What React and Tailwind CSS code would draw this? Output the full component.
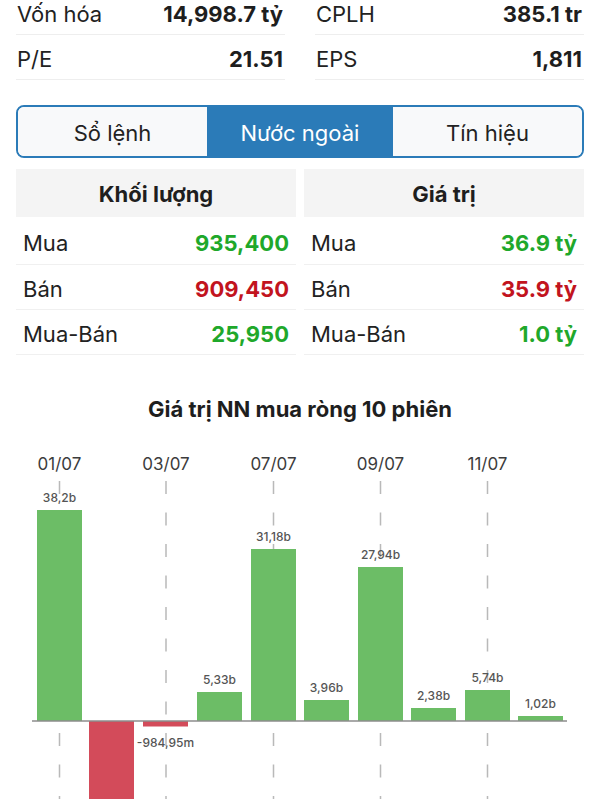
import React from "react";

const FONT = { fontFamily: 'Inter, "Noto Sans", sans-serif' };

const T = 430; // page y of svg top
const BASE = 722;

const bars = [
  { x: 37, top: 511, label: "38,2b" },
  { x: 89, bottom: 900, neg: true, label: "" },
  { x: 143, bottom: 727.5, neg: true, label: "-984,95m" },
  { x: 197, top: 693, label: "5,33b" },
  { x: 251, top: 550, label: "31,18b" },
  { x: 304, top: 701, label: "3,96b" },
  { x: 358, top: 568, label: "27,94b" },
  { x: 411, top: 709, label: "2,38b" },
  { x: 465, top: 691, label: "5,74b" },
  { x: 518, top: 717, label: "1,02b" },
];

const dates = [
  { x: 59.5, t: "01/07" },
  { x: 166, t: "03/07" },
  { x: 273.5, t: "07/07" },
  { x: 380.5, t: "09/07" },
  { x: 487.5, t: "11/07" },
];

function Chart() {
  const y = (v) => v - T;
  return (
    <svg width="600" height="370" viewBox="0 0 600 370" className="block">
      {dates.map((d) => (
        <g key={d.t}>
          <text
            x={d.x}
            y={y(465)}
            textAnchor="middle"
            dominantBaseline="central"
            fontSize="17"
            fill="#3c3c3c"
            style={FONT}
          >
            {d.t}
          </text>
          <line
            x1={d.x}
            x2={d.x}
            y1={y(482)}
            y2={y(812)}
            stroke="#b9b9b9"
            strokeWidth="1.5"
            strokeDasharray="13 18.5"
          />
        </g>
      ))}
      {bars.map((b, i) => {
        const w = 45;
        if (b.neg) {
          return (
            <g key={i}>
              <rect x={b.x} y={y(BASE)} width={w} height={b.bottom - BASE} fill="#d34b5a" />
              {b.label && (
                <text
                  x={b.x + w / 2}
                  y={y(b.bottom + 15.5)}
                  textAnchor="middle"
                  dominantBaseline="central"
                  fontSize="12"
                  fontWeight="500"
                  fill="#555"
                  style={FONT}
                >
                  {b.label}
                </text>
              )}
            </g>
          );
        }
        return (
          <g key={i}>
            <rect x={b.x} y={y(b.top)} width={w} height={BASE - b.top} fill="#6cbd66" />
            <text
              x={b.x + w / 2}
              y={y(b.top - 13)}
              textAnchor="middle"
              dominantBaseline="central"
              fontSize="12"
              fontWeight="500"
              fill="#555"
              style={FONT}
            >
              {b.label}
            </text>
          </g>
        );
      })}
      <line x1="32" x2="567" y1={y(BASE)} y2={y(BASE)} stroke="#8c8c8c" strokeWidth="1.5" />
    </svg>
  );
}

function InfoRow({ label, value }) {
  return (
    <div className="flex h-[45px] items-center justify-between border-b border-[#eeeeee] pl-[1px] pr-[2px] pt-[3px]">
      <span className="text-[22px] leading-[28px] text-[#222]">{label}</span>
      <span className="text-[22px] font-bold leading-[28px] text-[#1e1e1e]">{value}</span>
    </div>
  );
}

function TableRow({ label, value, color, h }) {
  return (
    <div className={`flex items-center justify-between border-b border-[#f0f0f0] px-[7px] pt-[4px] ${h}`}>
      <span className="text-[22px] leading-[28px] text-[#222]">{label}</span>
      <span className={`text-[22px] font-bold leading-[28px] ${color}`}>{value}</span>
    </div>
  );
}

function Table({ title, rows }) {
  return (
    <div className="flex flex-col">
      <div className="flex h-[48px] items-center justify-center bg-[#f4f4f4] pt-[2px] text-[22px] font-bold leading-[28px] text-[#1e1e1e]">
        {title}
      </div>
      <TableRow {...rows[0]} h="h-[48px]" />
      <TableRow {...rows[1]} h="h-[45px]" />
      <TableRow {...rows[2]} h="h-[45px]" />
    </div>
  );
}

export default function App() {
  return (
    <div className="h-[800px] w-[600px] overflow-hidden bg-white" style={FONT}>
      <div className="-mt-[10px] grid grid-cols-2 gap-[30px] px-4">
        <div className="flex flex-col">
          <InfoRow label="Vốn hóa" value="14,998.7 tỷ" />
          <InfoRow label="P/E" value="21.51" />
        </div>
        <div className="flex flex-col">
          <InfoRow label="CPLH" value="385.1 tr" />
          <InfoRow label="EPS" value="1,811" />
        </div>
      </div>

      <div className="mx-4 mt-[25px] grid h-[53px] grid-cols-[1fr_186px_1fr] overflow-hidden rounded-[8px] border-2 border-[#2b7bb8]">
        <div className="flex items-center justify-center bg-[#f8f9fa] pt-[3px] text-[22px] leading-[28px] text-[#222]">Sổ lệnh</div>
        <div className="flex items-center justify-center bg-[#2b7bb8] pt-[3px] text-[22px] leading-[28px] text-white">Nước ngoài</div>
        <div className="flex items-center justify-center bg-[#f8f9fa] pt-[3px] text-[22px] leading-[28px] text-[#222]">Tín hiệu</div>
      </div>

      <div className="mx-4 mt-[11px] grid grid-cols-2 gap-2">
        <Table
          title="Khối lượng"
          rows={[
            { label: "Mua", value: "935,400", color: "text-[#1fa82b]" },
            { label: "Bán", value: "909,450", color: "text-[#c2141e]" },
            { label: "Mua-Bán", value: "25,950", color: "text-[#1fa82b]" },
          ]}
        />
        <Table
          title="Giá trị"
          rows={[
            { label: "Mua", value: "36.9 tỷ", color: "text-[#1fa82b]" },
            { label: "Bán", value: "35.9 tỷ", color: "text-[#c2141e]" },
            { label: "Mua-Bán", value: "1.0 tỷ", color: "text-[#1fa82b]" },
          ]}
        />
      </div>

      <div className="mt-[42px] text-center text-[22px] font-bold leading-[24px] text-[#1e1e1e]">
        Giá trị NN mua ròng 10 phiên
      </div>
      <div className="mt-[8px]">
        <Chart />
      </div>
    </div>
  );
}
